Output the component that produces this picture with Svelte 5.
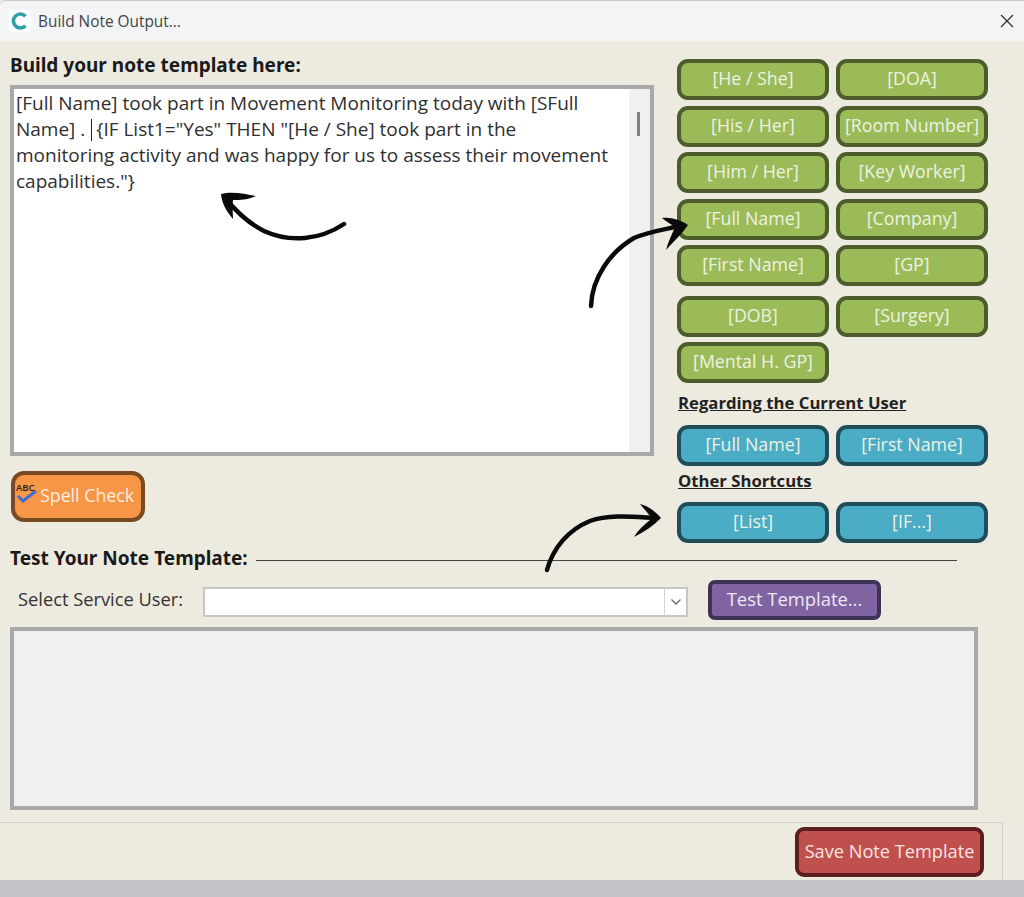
<script>
  const greenRows = [
    ['[He / She]', '[DOA]'],
    ['[His / Her]', '[Room Number]'],
    ['[Him / Her]', '[Key Worker]'],
    ['[Full Name]', '[Company]'],
    ['[First Name]', '[GP]'],
    ['[DOB]', '[Surgery]'],
    ['[Mental H. GP]']
  ];
</script>

<div class="window">
  <header class="titlebar">
    <span class="logo">
      <svg width="22" height="22" viewBox="0 0 22 22">
        <rect width="22" height="22" fill="#fff" />
        <path d="M16.5 6.2 A7 7 0 1 0 16.5 15.8" fill="none" stroke="#2f9fa8" stroke-width="3.6" />
      </svg>
    </span>
    <span class="title">Build Note Output...</span>
    <svg class="close" width="14" height="14" viewBox="0 0 14 14">
      <path d="M1 1 L13 13 M13 1 L1 13" stroke="#333" stroke-width="1.3" />
    </svg>
  </header>

  <main class="body">
    <div class="top">
      <section class="editor">
        <h2 class="heading">Build your note template here:</h2>
        <div class="textbox">
          <p class="note">[Full Name] took part in Movement Monitoring today with [SFull<br />Name] .<span class="caret"></span>{'{'}IF List1="Yes" THEN "[He / She] took part in the<br />monitoring activity and was happy for us to assess their movement<br />capabilities."{'}'}</p>
          <div class="scrollbar"><span class="thumb"></span></div>
        </div>
        <button class="btn orange spell">
          <span class="spell-icon">
            <span class="abc">ABC</span>
            <svg width="22" height="15" viewBox="0 0 22 15">
              <path d="M3 8 L8 13 L21 3" fill="none" stroke="#3a6fd0" stroke-width="3" />
            </svg>
          </span>
          Spell Check
        </button>
      </section>

      <aside class="fields">
        <div class="grid">
          {#each greenRows as row, i}
            {#each row as label}
              <button class="btn green" class:spaced={i === 5}>{label}</button>
            {/each}
          {/each}
        </div>
        <h3 class="sub">Regarding the Current User</h3>
        <div class="grid">
          <button class="btn blue">[Full Name]</button>
          <button class="btn blue">[First Name]</button>
        </div>
        <h3 class="sub second">Other Shortcuts</h3>
        <div class="grid">
          <button class="btn blue">[List]</button>
          <button class="btn blue">[IF...]</button>
        </div>
      </aside>
    </div>

    <div class="test-head">
      <h2 class="heading">Test Your Note Template:</h2>
      <span class="rule"></span>
    </div>

    <div class="test-row">
      <span class="select-label">Select Service User:</span>
      <div class="select">
        <span class="drop">
          <svg width="12" height="8" viewBox="0 0 12 8">
            <path d="M1.5 1.5 L6 6 L10.5 1.5" fill="none" stroke="#666" stroke-width="1.3" />
          </svg>
        </span>
      </div>
      <button class="btn purple">Test Template...</button>
    </div>

    <div class="output"></div>
  </main>

  <footer class="footer">
    <button class="btn red">Save Note Template</button>
  </footer>

  <div class="strip"></div>

  <svg class="arrows" width="1024" height="897" viewBox="0 0 1024 897">
    <g fill="none" stroke="#0a0a0a" stroke-width="4.5" stroke-linecap="round">
      <path d="M344 224 C320 240 290 243 264 231 C248 223 235 210 226 199" />
      <path d="M591 306 C592 278 610 252 634 238 C650 231 668 229 684 225" />
      <path d="M547 570 C553 548 568 530 590 521 C610 514 635 517 656 518" />
    </g>
    <g fill="#0a0a0a">
      <path d="M221 194 C232 191 245 194 256 196 C248 200 240 200 233 200 C232 207 233 213 233 219 C227 212 222 204 221 194Z" />
      <path d="M688 225 C680 220 672 217 662 218 C667 222 671 224 675 227 C672 234 668 242 666 250 C674 241 682 234 688 225Z" />
      <path d="M661 518 C655 511 648 506 640 504 C644 509 647 512 650 516 L650 520 C644 525 638 530 634 537 C644 532 653 526 661 518Z" />
    </g>
  </svg>
</div>

<style>
  :global(body) {
    margin: 0;
    background: #c4c4c8;
  }

  .window {
    position: relative;
    width: 1024px;
    height: 897px;
    display: flex;
    flex-direction: column;
    overflow: hidden;
    background: #edeae0;
    font-family: "Open Sans", "Noto Sans", sans-serif;
    color: #333;
  }

  .titlebar {
    height: 41px;
    flex: none;
    display: flex;
    align-items: center;
    padding: 0 10px 0 9px;
    background: #f3f4f6;
    border-top: 1px solid #c8c8c8;
    border-top-left-radius: 6px;
    box-sizing: border-box;
  }

  .logo {
    display: flex;
    width: 22px;
    height: 22px;
  }

  .title {
    margin-left: 7px;
    font-size: 15.4px;
    color: #444;
  }

  .close {
    margin-left: auto;
  }

  .body {
    flex: 1;
    min-height: 0;
    padding: 0 0 0 10px;
  }

  .top {
    display: flex;
    height: 505px;
  }

  .editor {
    width: 644px;
    flex: none;
  }

  .heading {
    margin: 0;
    font-size: 19px;
    line-height: 24px;
    font-family: "Noto Sans", sans-serif;
    font-weight: 700;
    color: #1a1a1a;
  }

  .editor .heading {
    margin-top: 12px;
  }

  .textbox {
    margin-top: 8px;
    height: 371px;
    box-sizing: border-box;
    border: 4px solid #a9a9a9;
    background: #fff;
    display: flex;
  }

  .note {
    flex: 1;
    margin: 0;
    padding: 1px 0 0 2px;
    font-size: 19px;
    line-height: 26px;
    white-space: nowrap;
    color: #2f2f2f;
  }

  .caret {
    display: inline-block;
    width: 1px;
    height: 22px;
    margin: 0 4px 0 6px;
    vertical-align: -5px;
    background: #222;
  }

  .scrollbar {
    width: 21px;
    flex: none;
    background: #f0f0f0;
    position: relative;
  }

  .thumb {
    display: block;
    width: 3px;
    height: 24px;
    margin: 23px 0 0 8px;
    background: #808080;
  }

  .btn {
    box-sizing: border-box;
    height: 41px;
    padding: 0 0 3px;
    border-radius: 11px;
    border: 4px solid;
    font-family: inherit;
    font-size: 17.8px;
    white-space: nowrap;
    color: #eef2e2;
  }

  .green {
    background: #9bbb59;
    border-color: #4c5c2a;
  }

  .spaced {
    margin-top: 4px;
  }

  .blue {
    background: #4bacc6;
    border-color: #1f4e5a;
  }

  .orange {
    background: #f79646;
    border-color: #7a4b22;
    color: #fdeee0;
  }

  .purple {
    background: #8064a2;
    border-color: #3f3151;
    border-radius: 7px;
    color: #eee8f4;
  }

  .red {
    background: #c0504d;
    border-color: #5c1f1d;
    border-radius: 9px;
    color: #f6e4e3;
  }

  .spell {
    display: flex;
    align-items: center;
    width: 134px;
    height: 51px;
    margin: 15px 0 0 1px;
    border-radius: 13px;
  }

  .spell-icon {
    position: relative;
    width: 25px;
    height: 24px;
    flex: none;
  }

  .spell-icon svg {
    position: absolute;
    left: 0;
    top: 5px;
  }

  .abc {
    position: absolute;
    left: 1px;
    top: 0;
    font-size: 9.5px;
    line-height: 9px;
    font-weight: 600;
    color: #222;
  }

  .fields {
    margin-left: 23px;
    padding-top: 18px;
    width: 311px;
    flex: none;
  }

  .grid {
    display: grid;
    grid-template-columns: 152px 152px;
    column-gap: 7px;
    row-gap: 5.5px;
  }

  .sub {
    margin: 10px 0 12px 1px;
    font-size: 16.7px;
    line-height: 20px;
    font-weight: 700;
    text-decoration: underline;
    color: #222;
  }

  .sub.second {
    margin: 5px 0 11px 1px;
  }

  .test-head {
    display: flex;
    align-items: center;
    height: 24px;
  }

  .rule {
    flex: none;
    width: 701px;
    height: 1px;
    margin: 5px 0 0 8px;
    background: #444;
  }

  .test-row {
    display: flex;
    align-items: center;
    margin-top: 10px;
    padding-left: 8px;
  }

  .select-label {
    width: 185px;
    margin-top: -4px;
    font-size: 18.3px;
  }

  .select {
    width: 485px;
    height: 30px;
    margin-top: 3px;
    box-sizing: border-box;
    border: 2px solid #c6c6c6;
    background: #fff;
    display: flex;
    justify-content: flex-end;
  }

  .drop {
    width: 21px;
    border-left: 1px solid #d4d4d4;
    display: flex;
    align-items: center;
    justify-content: center;
  }

  .purple {
    width: 173px;
    height: 40px;
    margin-left: 20px;
    font-size: 18.4px;
  }

  .output {
    width: 968px;
    height: 183px;
    margin-top: 7px;
    box-sizing: border-box;
    border: 4px solid #a9a9a9;
    background: #f0f0f0;
  }

  .footer {
    position: absolute;
    left: 0;
    top: 822px;
    width: 1003px;
    height: 58px;
    box-sizing: border-box;
    border-top: 1px solid #cfcfcf;
    border-right: 1px solid #cfcfcf;
    display: flex;
    justify-content: flex-end;
    padding: 4px 18px 0 0;
  }

  .red {
    width: 189px;
    height: 50px;
    font-size: 18.2px;
  }

  .strip {
    position: absolute;
    left: 0;
    right: 0;
    bottom: 0;
    height: 17px;
    background: #c4c4c8;
  }

  .arrows {
    position: absolute;
    left: 0;
    top: 0;
    pointer-events: none;
  }
</style>
